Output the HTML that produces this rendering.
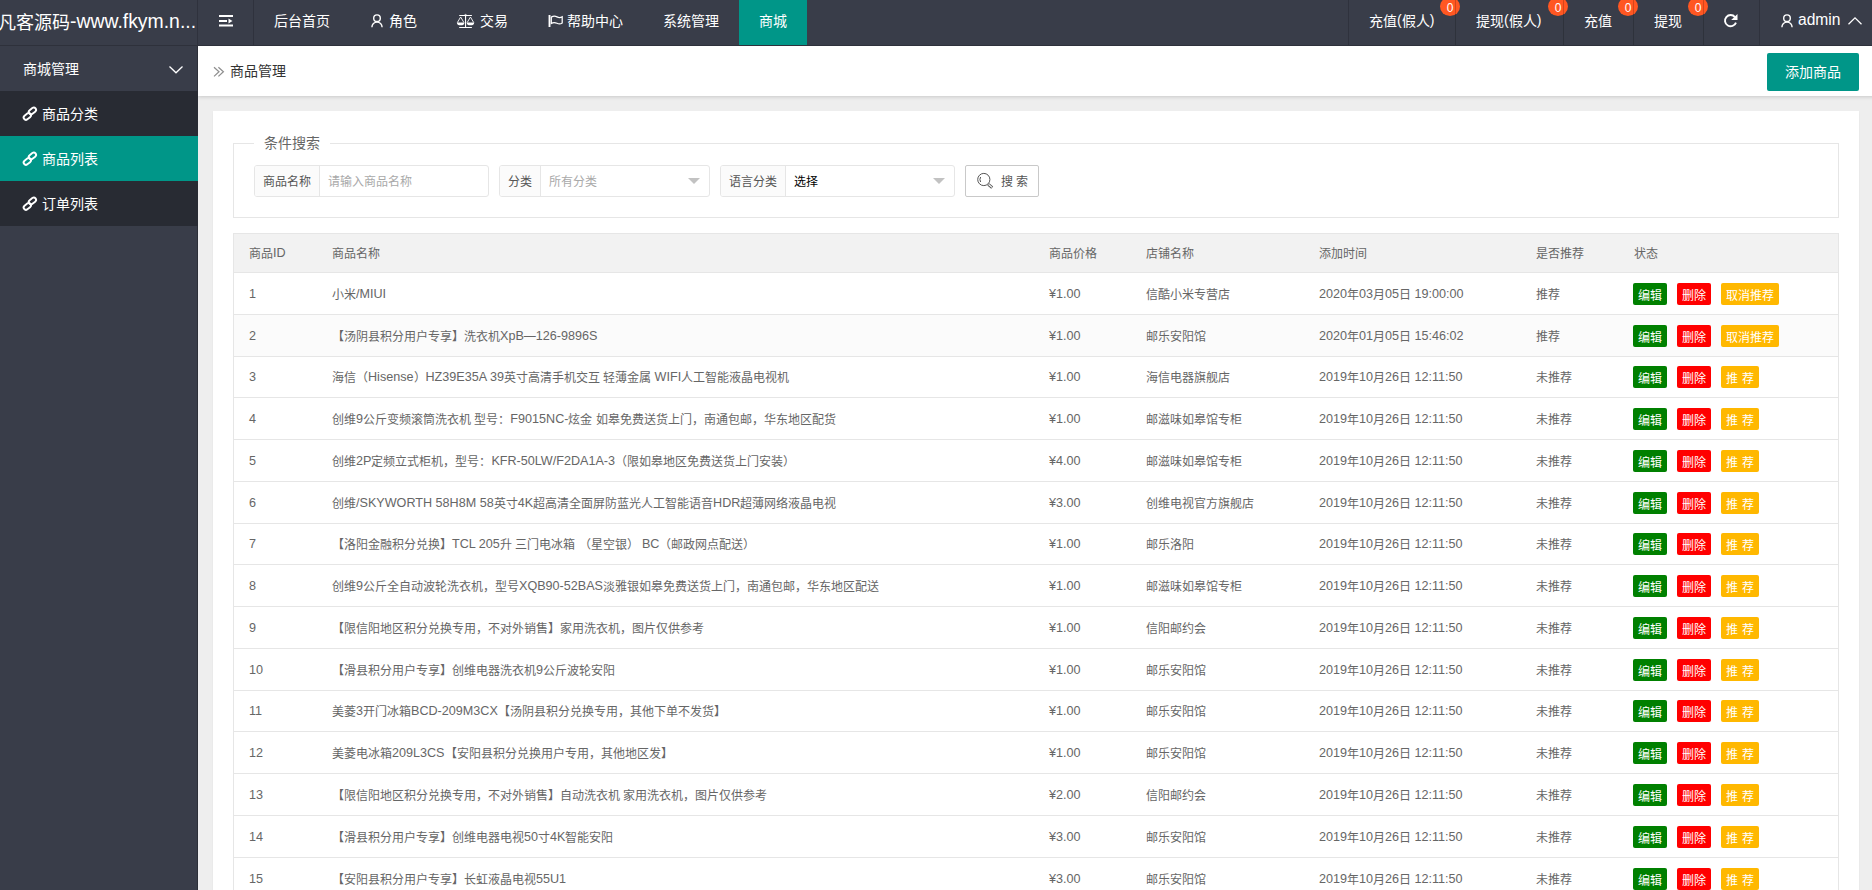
<!DOCTYPE html>
<html lang="zh-CN">
<head>
<meta charset="utf-8">
<title>商品管理</title>
<style>
*{box-sizing:border-box;margin:0;padding:0}
html,body{width:1872px;height:890px;overflow:hidden}
body{background:#eee;font-family:"Liberation Sans",sans-serif;font-size:14px;color:#333;position:relative}
svg{position:absolute;overflow:visible}
.abs{position:absolute}
i{display:inline-block;font-style:normal;text-align:justify;text-align-last:justify;white-space:nowrap;position:relative;top:1px}
/* header */
#hd{z-index:3;position:absolute;left:0;top:0;width:1872px;height:46px;background:#393d49;border-bottom:1px solid #2e313b;color:#fff;overflow:hidden}
#logo{position:absolute;left:0;top:0;width:197px;height:45px;overflow:hidden;white-space:nowrap;font-size:18px;line-height:42px}
#logo>span{position:absolute;left:-2px;top:0}
.vl{position:absolute;top:0;width:1px;height:45px;background:#2f323d}
.nv{position:absolute;top:0;height:45px;line-height:40px;font-size:14px;color:#fff;white-space:nowrap}
.nv.on{background:#009688;height:46px}
.bd{position:absolute;top:-3px;width:20px;height:19px;border-radius:50%;background:#ff5722;color:#fff;font-size:12px;line-height:22px;text-align:center}
/* side */
#sd{z-index:2;position:absolute;left:0;top:46px;width:198px;height:844px;background:#393d49;border-right:1px solid #2c2f38;color:#fff}
.s0{position:absolute;left:0;top:0;width:197px;height:45px;line-height:44px;padding-left:23px;font-size:14px}
.s1{position:absolute;left:0;width:198px;height:45px;line-height:44px;padding-left:42px;font-size:14px;background:#282b33}
.s1.on{background:#009688}
/* breadcrumb */
#bc{position:absolute;left:198px;top:46px;width:1700px;height:50px;background:#fff;box-shadow:0 1px 4px rgba(0,0,0,.16)}
#bc .t{position:absolute;left:32px;top:0;line-height:49px;font-size:14px;color:#333}
#add{position:absolute;left:1569px;top:7px;width:92px;height:38px;border-radius:2px;background:#009688;color:#fff;font-size:14px;line-height:37px;text-align:center}
/* card */
#cd{position:absolute;left:213px;top:111px;width:1646px;height:800px;background:#fff;box-shadow:0 1px 2px 0 rgba(0,0,0,.05)}
#fs{position:absolute;left:20px;top:32px;width:1606px;height:75px;border:1px solid #e6e6e6}
#lg{position:absolute;left:20px;top:-12px;width:76px;height:24px;background:#fff;text-align:center;font-size:14px;line-height:20px;color:#666}
.g{position:absolute;top:21px;height:32px;border:1px solid #e6e6e6;border-radius:3px;font-size:12px;color:#555;background:#fff}
.g .l{position:absolute;left:0;top:0;height:30px;line-height:30px;background:#fbfbfb;border-right:1px solid #e6e6e6;text-align:center;border-radius:2px 0 0 2px}
.g .v{position:absolute;top:0;height:30px;line-height:30px;white-space:nowrap}
.ph{color:#a9a9a9}
.tri{position:absolute;top:12px;width:0;height:0;border:6px solid transparent;border-top-color:#c2c2c2}
#sb{position:absolute;left:731px;top:21px;width:74px;height:32px;border:1px solid #c9c9c9;border-radius:2px;background:#fff;font-size:12px;color:#555;line-height:30px}
/* table */
#tb{position:absolute;left:20px;top:122px;width:1606px;height:700px;border:1px solid #e6e6e6;border-bottom:0;font-size:12px;color:#666}
#th{position:absolute;left:0;top:0;width:1604px;height:39px;background:#f2f2f2;border-bottom:1px solid #e6e6e6}
.r{position:absolute;left:0;width:1604px;border-bottom:1px solid #e6e6e6}
.r.hov{background:#fbfbfb}
.ri{position:relative;display:flex;align-items:center;width:1604px}
#th .ri{height:38px}
.c{position:absolute;white-space:nowrap;line-height:20px;top:50%;margin-top:-10px}
.c1{left:15px}.c2{left:98px}.c3{left:815px}.c4{left:912px}.c5{left:1085px}.c6{left:1302px}.c7{left:1399px}
.e{font-size:12.6px}
.b{position:absolute;top:-1px;height:22px;line-height:24px;border-radius:2px;color:#fff;text-align:center;font-size:12px}
.b1{left:0;width:34px;background:#008000}
.b2{left:44px;width:34px;background:#f00}
.b3{left:88px;background:#ffb800}
.w58{width:58px}.w38{width:38px}

</style>
</head>
<body>
<div id="hd">
  <div id="logo"><span><i style="width:4em">凡客源码</i><span style="font-size:19.4px">-www.fkym.n...</span></span></div>
  <div class="vl" style="left:197px"></div>
  <svg style="left:219px;top:15px" width="14" height="12" viewBox="0 0 14 12" fill="#fff"><rect x="0" y="0" width="14" height="2"/><rect x="0" y="5" width="8" height="2"/><path d="M9.5 3.5L13.5 6L9.5 8.5Z"/><rect x="0" y="9.5" width="14" height="2"/></svg>
  <div class="vl" style="left:253px"></div>
  <div class="nv" style="left:274px"><i style="width:4em">后台首页</i></div>
  <svg style="left:371px;top:14px" width="12" height="14" viewBox="0 0 12 14" fill="none" stroke="#fff" stroke-width="1.4"><circle cx="6" cy="4.2" r="3.3"/><path d="M0.9 13.2A5.1 5.1 0 0 1 11.1 13.2"/></svg>
  <div class="nv" style="left:389px"><i style="width:2em">角色</i></div>
  <svg style="left:456px;top:14px" width="19" height="14" viewBox="0 0 19 14" fill="none" stroke="#fff" stroke-width="0.9"><path d="M3.2 1.5H15.9M9.55 1.2V13.5M3.2 13.5H15.9" stroke-width="1.1"/><circle cx="9.55" cy="1.3" r="0.9" stroke-width="0.8"/><path d="M1.4 8.5L4.65 3L7.9 8.5M11.2 8.5L14.45 3L17.7 8.5"/><path d="M0.9 8.4H8.4A3.75 2.9 0 0 1 0.9 8.4ZM10.7 8.4H18.2A3.75 2.9 0 0 1 10.7 8.4Z" fill="#fff" stroke="none"/></svg>
  <div class="nv" style="left:480px"><i style="width:2em">交易</i></div>
  <svg style="left:548px;top:15px" width="15" height="12" viewBox="0 0 15 12" fill="none" stroke="#fff"><path d="M1.5 0V12" stroke-width="1.9"/><path d="M3.3 2.1C5 1.1 7.5 1.1 9 1.9S12.5 2.9 14.2 1.8V8C12.5 9.2 10.5 9.1 9 8.3S5 7.3 3.3 8.4Z" stroke-width="1.25"/></svg>
  <div class="nv" style="left:567px"><i style="width:4em">帮助中心</i></div>
  <div class="nv" style="left:663px"><i style="width:4em">系统管理</i></div>
  <div class="nv on" style="left:739px;width:68px;text-align:center"><i style="width:2em">商城</i></div>

  <div class="vl" style="left:1348px"></div>
  <div class="nv" style="left:1369px"><i style="width:2em">充值</i>(<i style="width:2em">假人</i>)</div>
  <div class="bd" style="left:1440px">0</div>
  <div class="vl" style="left:1455px;background:rgba(0,0,0,.18)"></div>
  <div class="nv" style="left:1476px"><i style="width:2em">提现</i>(<i style="width:2em">假人</i>)</div>
  <div class="bd" style="left:1548px">0</div>
  <div class="vl" style="left:1563px;background:rgba(0,0,0,.18)"></div>
  <div class="nv" style="left:1584px"><i style="width:2em">充值</i></div>
  <div class="bd" style="left:1618px">0</div>
  <div class="vl" style="left:1633px;background:rgba(0,0,0,.18)"></div>
  <div class="nv" style="left:1654px"><i style="width:2em">提现</i></div>
  <div class="bd" style="left:1688px">0</div>
  <div class="vl" style="left:1703px;background:rgba(0,0,0,.18)"></div>
  <svg style="left:1724px;top:14px" width="14" height="14" viewBox="0 0 14 14" fill="none"><path d="M10.98 3.02A5.65 5.65 0 1 0 11.96 8.58" stroke="#fff" stroke-width="1.9"/><path d="M13.5 0V6H7.2Z" fill="#fff"/></svg>
  <div class="vl" style="left:1759px"></div>
  <svg style="left:1781px;top:14px" width="12" height="14" viewBox="0 0 12 14" fill="none" stroke="#fff" stroke-width="1.4"><circle cx="6" cy="4.2" r="3.3"/><path d="M0.9 13.2A5.1 5.1 0 0 1 11.1 13.2"/></svg>
  <div class="nv" style="left:1798px;font-size:15.6px">admin</div>
  <svg style="left:1848px;top:17px" width="14" height="8" viewBox="0 0 14 8" fill="none" stroke="#fff" stroke-width="1.3"><path d="M0.5 7.2L7 0.9L13.5 7.2"/></svg>
</div>

<div id="sd">
  <div class="s0"><i style="width:4em">商城管理</i></div>
  <svg style="left:169px;top:20px" width="14" height="8" viewBox="0 0 14 8" fill="none" stroke="#fff" stroke-width="1.3"><path d="M0.5 0.5L7 6.8L13.5 0.5"/></svg>
  <div class="s1" style="top:45px"><i style="width:4em">商品分类</i></div>
  <div class="s1 on" style="top:90px"><i style="width:4em">商品列表</i></div>
  <div class="s1" style="top:135px"><i style="width:4em">订单列表</i></div>
  <svg style="left:22px;top:60px" width="16" height="15" viewBox="0 0 16 15" fill="none" stroke="#fff" stroke-width="1.9"><rect x="-4" y="-2.3" width="8" height="4.6" rx="2.3" transform="translate(5.3 10.4) rotate(-38)"/><rect x="-4" y="-2.3" width="8" height="4.6" rx="2.3" transform="translate(10.4 4.9) rotate(-38)"/></svg>
  <svg style="left:22px;top:105px" width="16" height="15" viewBox="0 0 16 15" fill="none" stroke="#fff" stroke-width="1.9"><rect x="-4" y="-2.3" width="8" height="4.6" rx="2.3" transform="translate(5.3 10.4) rotate(-38)"/><rect x="-4" y="-2.3" width="8" height="4.6" rx="2.3" transform="translate(10.4 4.9) rotate(-38)"/></svg>
  <svg style="left:22px;top:150px" width="16" height="15" viewBox="0 0 16 15" fill="none" stroke="#fff" stroke-width="1.9"><rect x="-4" y="-2.3" width="8" height="4.6" rx="2.3" transform="translate(5.3 10.4) rotate(-38)"/><rect x="-4" y="-2.3" width="8" height="4.6" rx="2.3" transform="translate(10.4 4.9) rotate(-38)"/></svg>
</div>

<div id="bc">
  <svg style="left:16px;top:21px" width="10" height="10" viewBox="0 0 10 10" fill="none" stroke="#8f8f8f" stroke-width="1.25"><path d="M0 0.2L5 4.8L0 9.4M4.4 0.2L9.4 4.8L4.4 9.4"/></svg>
  <div class="t"><i style="width:4em">商品管理</i></div>
  <div id="add"><i style="width:4em">添加商品</i></div>
</div>

<div id="cd">
  <div id="fs">
    <div id="lg"><i style="width:4em">条件搜索</i></div>
    <div class="g" style="left:20px;width:235px"><div class="l" style="width:65px"><i style="width:4em">商品名称</i></div><div class="v ph" style="left:73px"><i style="width:7em">请输入商品名称</i></div></div>
    <div class="g" style="left:265px;width:211px"><div class="l" style="width:41px"><i style="width:2em">分类</i></div><div class="v ph" style="left:49px"><i style="width:4em">所有分类</i></div><div class="tri" style="left:188px"></div></div>
    <div class="g" style="left:486px;width:235px"><div class="l" style="width:65px"><i style="width:4em">语言分类</i></div><div class="v" style="left:73px;color:#000"><i style="width:2em">选择</i></div><div class="tri" style="left:212px"></div></div>
    <div id="sb"><svg style="left:10px;top:6px" width="18" height="18" viewBox="0 0 18 18" fill="none" stroke="#555" stroke-width="1"><circle cx="7.8" cy="7.5" r="6.1"/><path d="M4.6 5A5 5 0 0 0 4.6 10"/><path d="M12.3 12.3L16.2 15.6" stroke-width="3"/><path d="M12.6 12.5L16 15.4" stroke="#fff" stroke-width="1.2"/></svg><span class="abs" style="left:35px;top:0"><i style="width:1em">搜</i> <i style="width:1em">索</i></span></div>
  </div>
  <div id="tb">
    <div id="th"><div class="ri"><span class="c c1"><i style="width:2em">商品</i><span class="e">ID</span></span><span class="c c2"><i style="width:4em">商品名称</i></span><span class="c c3"><i style="width:4em">商品价格</i></span><span class="c c4"><i style="width:4em">店铺名称</i></span><span class="c c5"><i style="width:4em">添加时间</i></span><span class="c c6"><i style="width:4em">是否推荐</i></span><span class="c c7" style="left:1400px"><i style="width:2em">状态</i></span></div></div>
<div class="r" style="top:39px;height:42px"><div class="ri" style="height:41px"><span class="c c1"><span class="e">1</span></span><span class="c c2"><i style="width:2em">小米</i><span class="e">/MIUI</span></span><span class="c c3"><span class="e">¥1.00</span></span><span class="c c4"><i style="width:7em">信酷小米专营店</i></span><span class="c c5"><span class="e">2020</span><i style="width:1em">年</i><span class="e">03</span><i style="width:1em">月</i><span class="e">05</span><i style="width:1em">日</i> <span class="e">19:00:00</span></span><span class="c c6"><i style="width:2em">推荐</i></span><span class="c c7"><span class="b b1"><i style="width:2em">编辑</i></span><span class="b b2"><i style="width:2em">删除</i></span><span class="b b3 w58"><i style="width:4em">取消推荐</i></span></span></div></div>
<div class="r hov" style="top:81px;height:42px"><div class="ri" style="height:41px"><span class="c c1"><span class="e">2</span></span><span class="c c2"><i style="width:14em">【汤阴县积分用户专享】洗衣机</i><span class="e">XpB</span>—<span class="e">126-9896S</span></span><span class="c c3"><span class="e">¥1.00</span></span><span class="c c4"><i style="width:5em">邮乐安阳馆</i></span><span class="c c5"><span class="e">2020</span><i style="width:1em">年</i><span class="e">01</span><i style="width:1em">月</i><span class="e">05</span><i style="width:1em">日</i> <span class="e">15:46:02</span></span><span class="c c6"><i style="width:2em">推荐</i></span><span class="c c7"><span class="b b1"><i style="width:2em">编辑</i></span><span class="b b2"><i style="width:2em">删除</i></span><span class="b b3 w58"><i style="width:4em">取消推荐</i></span></span></div></div>
<div class="r" style="top:123px;height:41px"><div class="ri" style="height:40px"><span class="c c1"><span class="e">3</span></span><span class="c c2"><i style="width:3em">海信（</i><span class="e">Hisense</span><i style="width:1em">）</i><span class="e">HZ39E35A 39</span><i style="width:8em">英寸高清手机交互</i> <i style="width:4em">轻薄金属</i> <span class="e">WIFI</span><i style="width:9em">人工智能液晶电视机</i></span><span class="c c3"><span class="e">¥1.00</span></span><span class="c c4"><i style="width:7em">海信电器旗舰店</i></span><span class="c c5"><span class="e">2019</span><i style="width:1em">年</i><span class="e">10</span><i style="width:1em">月</i><span class="e">26</span><i style="width:1em">日</i> <span class="e">12:11:50</span></span><span class="c c6"><i style="width:3em">未推荐</i></span><span class="c c7"><span class="b b1"><i style="width:2em">编辑</i></span><span class="b b2"><i style="width:2em">删除</i></span><span class="b b3 w38"><i style="width:1em">推</i> <i style="width:1em">荐</i></span></span></div></div>
<div class="r" style="top:164px;height:42px"><div class="ri" style="height:41px"><span class="c c1"><span class="e">4</span></span><span class="c c2"><i style="width:2em">创维</i><span class="e">9</span><i style="width:9em">公斤变频滚筒洗衣机</i> <i style="width:3em">型号：</i><span class="e">F9015NC-</span><i style="width:2em">炫金</i> <i style="width:20em">如皋免费送货上门，南通包邮，华东地区配货</i></span><span class="c c3"><span class="e">¥1.00</span></span><span class="c c4"><i style="width:8em">邮滋味如皋馆专柜</i></span><span class="c c5"><span class="e">2019</span><i style="width:1em">年</i><span class="e">10</span><i style="width:1em">月</i><span class="e">26</span><i style="width:1em">日</i> <span class="e">12:11:50</span></span><span class="c c6"><i style="width:3em">未推荐</i></span><span class="c c7"><span class="b b1"><i style="width:2em">编辑</i></span><span class="b b2"><i style="width:2em">删除</i></span><span class="b b3 w38"><i style="width:1em">推</i> <i style="width:1em">荐</i></span></span></div></div>
<div class="r" style="top:206px;height:42px"><div class="ri" style="height:41px"><span class="c c1"><span class="e">5</span></span><span class="c c2"><i style="width:2em">创维</i><span class="e">2P</span><i style="width:10em">定频立式柜机，型号：</i><span class="e">KFR-50LW/F2DA1A-3</span><i style="width:15em">（限如皋地区免费送货上门安装）</i></span><span class="c c3"><span class="e">¥4.00</span></span><span class="c c4"><i style="width:8em">邮滋味如皋馆专柜</i></span><span class="c c5"><span class="e">2019</span><i style="width:1em">年</i><span class="e">10</span><i style="width:1em">月</i><span class="e">26</span><i style="width:1em">日</i> <span class="e">12:11:50</span></span><span class="c c6"><i style="width:3em">未推荐</i></span><span class="c c7"><span class="b b1"><i style="width:2em">编辑</i></span><span class="b b2"><i style="width:2em">删除</i></span><span class="b b3 w38"><i style="width:1em">推</i> <i style="width:1em">荐</i></span></span></div></div>
<div class="r" style="top:248px;height:42px"><div class="ri" style="height:41px"><span class="c c1"><span class="e">6</span></span><span class="c c2"><i style="width:2em">创维</i><span class="e">/SKYWORTH 58H8M 58</span><i style="width:2em">英寸</i><span class="e">4K</span><i style="width:15em">超高清全面屏防蓝光人工智能语音</i><span class="e">HDR</span><i style="width:8em">超薄网络液晶电视</i></span><span class="c c3"><span class="e">¥3.00</span></span><span class="c c4"><i style="width:9em">创维电视官方旗舰店</i></span><span class="c c5"><span class="e">2019</span><i style="width:1em">年</i><span class="e">10</span><i style="width:1em">月</i><span class="e">26</span><i style="width:1em">日</i> <span class="e">12:11:50</span></span><span class="c c6"><i style="width:3em">未推荐</i></span><span class="c c7"><span class="b b1"><i style="width:2em">编辑</i></span><span class="b b2"><i style="width:2em">删除</i></span><span class="b b3 w38"><i style="width:1em">推</i> <i style="width:1em">荐</i></span></span></div></div>
<div class="r" style="top:290px;height:41px"><div class="ri" style="height:40px"><span class="c c1"><span class="e">7</span></span><span class="c c2"><i style="width:10em">【洛阳金融积分兑换】</i><span class="e">TCL 205</span><i style="width:1em">升</i> <i style="width:5em">三门电冰箱</i> <i style="width:5em">（星空银）</i> <span class="e">BC</span><i style="width:8em">（邮政网点配送）</i></span><span class="c c3"><span class="e">¥1.00</span></span><span class="c c4"><i style="width:4em">邮乐洛阳</i></span><span class="c c5"><span class="e">2019</span><i style="width:1em">年</i><span class="e">10</span><i style="width:1em">月</i><span class="e">26</span><i style="width:1em">日</i> <span class="e">12:11:50</span></span><span class="c c6"><i style="width:3em">未推荐</i></span><span class="c c7"><span class="b b1"><i style="width:2em">编辑</i></span><span class="b b2"><i style="width:2em">删除</i></span><span class="b b3 w38"><i style="width:1em">推</i> <i style="width:1em">荐</i></span></span></div></div>
<div class="r" style="top:331px;height:42px"><div class="ri" style="height:41px"><span class="c c1"><span class="e">8</span></span><span class="c c2"><i style="width:2em">创维</i><span class="e">9</span><i style="width:13em">公斤全自动波轮洗衣机，型号</i><span class="e">XQB90-52BAS</span><i style="width:23em">淡雅银如皋免费送货上门，南通包邮，华东地区配送</i></span><span class="c c3"><span class="e">¥1.00</span></span><span class="c c4"><i style="width:8em">邮滋味如皋馆专柜</i></span><span class="c c5"><span class="e">2019</span><i style="width:1em">年</i><span class="e">10</span><i style="width:1em">月</i><span class="e">26</span><i style="width:1em">日</i> <span class="e">12:11:50</span></span><span class="c c6"><i style="width:3em">未推荐</i></span><span class="c c7"><span class="b b1"><i style="width:2em">编辑</i></span><span class="b b2"><i style="width:2em">删除</i></span><span class="b b3 w38"><i style="width:1em">推</i> <i style="width:1em">荐</i></span></span></div></div>
<div class="r" style="top:373px;height:42px"><div class="ri" style="height:41px"><span class="c c1"><span class="e">9</span></span><span class="c c2"><i style="width:31em">【限信阳地区积分兑换专用，不对外销售】家用洗衣机，图片仅供参考</i></span><span class="c c3"><span class="e">¥1.00</span></span><span class="c c4"><i style="width:5em">信阳邮约会</i></span><span class="c c5"><span class="e">2019</span><i style="width:1em">年</i><span class="e">10</span><i style="width:1em">月</i><span class="e">26</span><i style="width:1em">日</i> <span class="e">12:11:50</span></span><span class="c c6"><i style="width:3em">未推荐</i></span><span class="c c7"><span class="b b1"><i style="width:2em">编辑</i></span><span class="b b2"><i style="width:2em">删除</i></span><span class="b b3 w38"><i style="width:1em">推</i> <i style="width:1em">荐</i></span></span></div></div>
<div class="r" style="top:415px;height:42px"><div class="ri" style="height:41px"><span class="c c1"><span class="e">10</span></span><span class="c c2"><i style="width:17em">【滑县积分用户专享】创维电器洗衣机</i><span class="e">9</span><i style="width:6em">公斤波轮安阳</i></span><span class="c c3"><span class="e">¥1.00</span></span><span class="c c4"><i style="width:5em">邮乐安阳馆</i></span><span class="c c5"><span class="e">2019</span><i style="width:1em">年</i><span class="e">10</span><i style="width:1em">月</i><span class="e">26</span><i style="width:1em">日</i> <span class="e">12:11:50</span></span><span class="c c6"><i style="width:3em">未推荐</i></span><span class="c c7"><span class="b b1"><i style="width:2em">编辑</i></span><span class="b b2"><i style="width:2em">删除</i></span><span class="b b3 w38"><i style="width:1em">推</i> <i style="width:1em">荐</i></span></span></div></div>
<div class="r" style="top:457px;height:41px"><div class="ri" style="height:40px"><span class="c c1"><span class="e">11</span></span><span class="c c2"><i style="width:2em">美菱</i><span class="e">3</span><i style="width:4em">开门冰箱</i><span class="e">BCD-209M3CX</span><i style="width:19em">【汤阴县积分兑换专用，其他下单不发货】</i></span><span class="c c3"><span class="e">¥1.00</span></span><span class="c c4"><i style="width:5em">邮乐安阳馆</i></span><span class="c c5"><span class="e">2019</span><i style="width:1em">年</i><span class="e">10</span><i style="width:1em">月</i><span class="e">26</span><i style="width:1em">日</i> <span class="e">12:11:50</span></span><span class="c c6"><i style="width:3em">未推荐</i></span><span class="c c7"><span class="b b1"><i style="width:2em">编辑</i></span><span class="b b2"><i style="width:2em">删除</i></span><span class="b b3 w38"><i style="width:1em">推</i> <i style="width:1em">荐</i></span></span></div></div>
<div class="r" style="top:498px;height:42px"><div class="ri" style="height:41px"><span class="c c1"><span class="e">12</span></span><span class="c c2"><i style="width:5em">美菱电冰箱</i><span class="e">209L3CS</span><i style="width:19em">【安阳县积分兑换用户专用，其他地区发】</i></span><span class="c c3"><span class="e">¥1.00</span></span><span class="c c4"><i style="width:5em">邮乐安阳馆</i></span><span class="c c5"><span class="e">2019</span><i style="width:1em">年</i><span class="e">10</span><i style="width:1em">月</i><span class="e">26</span><i style="width:1em">日</i> <span class="e">12:11:50</span></span><span class="c c6"><i style="width:3em">未推荐</i></span><span class="c c7"><span class="b b1"><i style="width:2em">编辑</i></span><span class="b b2"><i style="width:2em">删除</i></span><span class="b b3 w38"><i style="width:1em">推</i> <i style="width:1em">荐</i></span></span></div></div>
<div class="r" style="top:540px;height:42px"><div class="ri" style="height:41px"><span class="c c1"><span class="e">13</span></span><span class="c c2"><i style="width:24em">【限信阳地区积分兑换专用，不对外销售】自动洗衣机</i> <i style="width:12em">家用洗衣机，图片仅供参考</i></span><span class="c c3"><span class="e">¥2.00</span></span><span class="c c4"><i style="width:5em">信阳邮约会</i></span><span class="c c5"><span class="e">2019</span><i style="width:1em">年</i><span class="e">10</span><i style="width:1em">月</i><span class="e">26</span><i style="width:1em">日</i> <span class="e">12:11:50</span></span><span class="c c6"><i style="width:3em">未推荐</i></span><span class="c c7"><span class="b b1"><i style="width:2em">编辑</i></span><span class="b b2"><i style="width:2em">删除</i></span><span class="b b3 w38"><i style="width:1em">推</i> <i style="width:1em">荐</i></span></span></div></div>
<div class="r" style="top:582px;height:42px"><div class="ri" style="height:41px"><span class="c c1"><span class="e">14</span></span><span class="c c2"><i style="width:16em">【滑县积分用户专享】创维电器电视</i><span class="e">50</span><i style="width:1em">寸</i><span class="e">4K</span><i style="width:4em">智能安阳</i></span><span class="c c3"><span class="e">¥3.00</span></span><span class="c c4"><i style="width:5em">邮乐安阳馆</i></span><span class="c c5"><span class="e">2019</span><i style="width:1em">年</i><span class="e">10</span><i style="width:1em">月</i><span class="e">26</span><i style="width:1em">日</i> <span class="e">12:11:50</span></span><span class="c c6"><i style="width:3em">未推荐</i></span><span class="c c7"><span class="b b1"><i style="width:2em">编辑</i></span><span class="b b2"><i style="width:2em">删除</i></span><span class="b b3 w38"><i style="width:1em">推</i> <i style="width:1em">荐</i></span></span></div></div>
<div class="r" style="top:624px;height:42px"><div class="ri" style="height:41px"><span class="c c1"><span class="e">15</span></span><span class="c c2"><i style="width:17em">【安阳县积分用户专享】长虹液晶电视</i><span class="e">55U1</span></span><span class="c c3"><span class="e">¥3.00</span></span><span class="c c4"><i style="width:5em">邮乐安阳馆</i></span><span class="c c5"><span class="e">2019</span><i style="width:1em">年</i><span class="e">10</span><i style="width:1em">月</i><span class="e">26</span><i style="width:1em">日</i> <span class="e">12:11:50</span></span><span class="c c6"><i style="width:3em">未推荐</i></span><span class="c c7"><span class="b b1"><i style="width:2em">编辑</i></span><span class="b b2"><i style="width:2em">删除</i></span><span class="b b3 w38"><i style="width:1em">推</i> <i style="width:1em">荐</i></span></span></div></div>
  </div>
</div>
</body>
</html>
